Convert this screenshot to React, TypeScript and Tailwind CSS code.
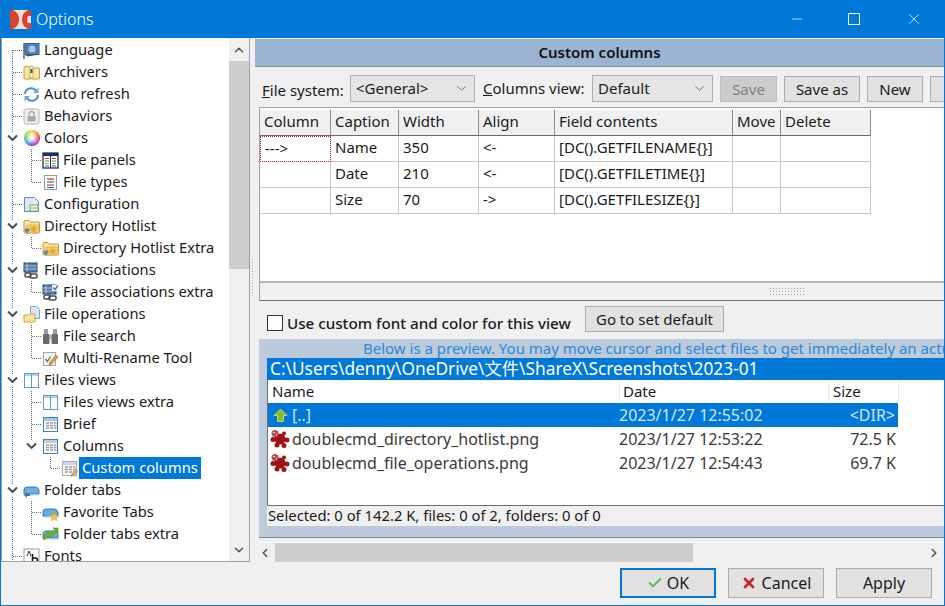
import React from 'react';
import { ChevronDown, ChevronUp, ChevronLeft, ChevronRight, X, Minus, Check } from 'lucide-react';

type IconName =
  | 'lang' | 'arch' | 'refresh' | 'lock' | 'wheel' | 'panels' | 'types' | 'config' | 'hotlist'
  | 'assoc' | 'assocx' | 'fileop' | 'search' | 'rename' | 'views' | 'brief' | 'cols' | 'custom'
  | 'tabs' | 'fav' | 'tabsx' | 'fonts';

type Row = { label: string; icon: IconName; level: number; open?: boolean; last?: boolean; selected?: boolean };

const rows: Row[] = [
  { label: 'Language', icon: 'lang', level: 0 },
  { label: 'Archivers', icon: 'arch', level: 0 },
  { label: 'Auto refresh', icon: 'refresh', level: 0 },
  { label: 'Behaviors', icon: 'lock', level: 0 },
  { label: 'Colors', icon: 'wheel', level: 0, open: true },
  { label: 'File panels', icon: 'panels', level: 1 },
  { label: 'File types', icon: 'types', level: 1, last: true },
  { label: 'Configuration', icon: 'config', level: 0 },
  { label: 'Directory Hotlist', icon: 'hotlist', level: 0, open: true },
  { label: 'Directory Hotlist Extra', icon: 'hotlist', level: 1, last: true },
  { label: 'File associations', icon: 'assoc', level: 0, open: true },
  { label: 'File associations extra', icon: 'assocx', level: 1, last: true },
  { label: 'File operations', icon: 'fileop', level: 0, open: true },
  { label: 'File search', icon: 'search', level: 1 },
  { label: 'Multi-Rename Tool', icon: 'rename', level: 1, last: true },
  { label: 'Files views', icon: 'views', level: 0, open: true },
  { label: 'Files views extra', icon: 'views', level: 1 },
  { label: 'Brief', icon: 'brief', level: 1 },
  { label: 'Columns', icon: 'cols', level: 1, open: true, last: true },
  { label: 'Custom columns', icon: 'custom', level: 2, last: true, selected: true },
  { label: 'Folder tabs', icon: 'tabs', level: 0, open: true },
  { label: 'Favorite Tabs', icon: 'fav', level: 1 },
  { label: 'Folder tabs extra', icon: 'tabsx', level: 1, last: true },
  { label: 'Fonts', icon: 'fonts', level: 0 },
];

const TableIcon = ({ head = '#5b9bd5', line = '#3d85b8', pen = false }: { head?: string; line?: string; pen?: boolean }) => (
  <svg width="17" height="17" viewBox="0 0 17 17">
    <rect x="1.500" y="1.500" width="14" height="14" fill="#fff" stroke={line} />
    <rect x="2" y="2" width="13" height="3" fill={head} opacity="0.55" />
    <path d="M4 7h3M8 7h3M12 7h2.500M4 9.500h3M8 9.500h3M12 9.500h2.500M4 12h3M8 12h3M12 12h2.500" stroke="#9a9a9a" strokeWidth="1.500" />
    {pen && <path d="M10 16.500l1-3 4-4 2 2-4 4z" fill="#e0b050" stroke="#a87820" strokeWidth="0.500" />}
  </svg>
);

const Folder = ({ children }: { children?: React.ReactNode }) => (
  <svg width="17" height="17" viewBox="0 0 17 17">
    <path d="M1 3.500q0-1 1-1h4l1.500 1.500h8q1 0 1 1v9q0 1-1 1h-13.500q-1 0-1-1z" fill="#fbe3a0" stroke="#c79a3a" />
    {children}
  </svg>
);

const Icon = ({ name }: { name: IconName }) => {
  switch (name) {
    case 'lang':
      return (
        <svg width="17" height="17" viewBox="0 0 17 17">
          <path d="M1 1v16" stroke="#5a6a7a" strokeWidth="1.500" />
          <rect x="2" y="1.500" width="14" height="11" fill="#4f7fb4" stroke="#33608f" />
          <circle cx="9" cy="7" r="3.500" fill="#a8c4e4" />
          <path d="M2 13l3 1.500 11-2z" fill="#2c5580" />
        </svg>
      );
    case 'arch':
      return (
        <Folder>
          <rect x="7" y="2" width="3" height="12" fill="#fff7d8" stroke="#9a7a30" strokeWidth="0.500" />
          <rect x="7.500" y="5" width="2" height="4" fill="#4a4a4a" />
        </Folder>
      );
    case 'refresh':
      return (
        <svg width="17" height="17" viewBox="0 0 17 17" fill="none" stroke="#4a8fcc" strokeWidth="2">
          <path d="M2 8a6 6 0 0 1 11-3" />
          <path d="M15.500 1.500v5.500h-5.500z" fill="#6fa9dc" stroke="none" />
          <path d="M15 9a6 6 0 0 1-11 3" />
          <path d="M1.500 15.500v-5.500h5.500z" fill="#6fa9dc" stroke="none" />
        </svg>
      );
    case 'lock':
      return (
        <svg width="17" height="17" viewBox="0 0 17 17">
          <rect x="1" y="1" width="15" height="15" rx="2" fill="#eeeeee" stroke="#b4b4b4" />
          <rect x="4.500" y="8" width="8" height="5.500" fill="#a8a8a8" />
          <path d="M6 8V6a2.500 2.500 0 0 1 5 0v2" fill="none" stroke="#a8a8a8" strokeWidth="1.300" />
        </svg>
      );
    case 'wheel':
      return <div className="w-[16px] h-[16px] rounded-full bg-[radial-gradient(#ffffff_10%,transparent_70%),conic-gradient(#f9d423,#f5832a,#e8264a,#c02fb4,#5a35d8,#2a9be0,#2fcf6a,#a8dc30,#f9d423)]" />;
    case 'panels':
      return (
        <svg width="17" height="17" viewBox="0 0 17 17">
          <rect x="1" y="1" width="15" height="15" fill="#fff" stroke="#1c2f5a" strokeWidth="1.300" />
          <rect x="1" y="1" width="15" height="3" fill="#1c2f5a" />
          <path d="M8.500 1v15" stroke="#1c2f5a" />
          <path d="M3 6.500h4M10 6.500h4" stroke="#d93030" />
          <path d="M3 9h4M10 9h4" stroke="#2aa04a" />
          <path d="M3 11.500h4M10 11.500h4" stroke="#e0a020" />
          <path d="M3 14h4M10 14h4" stroke="#3060c0" />
        </svg>
      );
    case 'types':
      return (
        <svg width="17" height="17" viewBox="0 0 17 17">
          <rect x="2.500" y="1.500" width="12" height="14" fill="#fff" stroke="#9a9a9a" />
          <path d="M5 5h7" stroke="#d93030" strokeWidth="1.300" />
          <path d="M5 8h7" stroke="#30a040" strokeWidth="1.300" />
          <path d="M5 11h7" stroke="#d04080" strokeWidth="1.300" />
          <path d="M5 13.500h7" stroke="#3060c0" strokeWidth="1" />
        </svg>
      );
    case 'config':
      return (
        <svg width="17" height="17" viewBox="0 0 17 17">
          <path d="M1.500 1.500h10l4 4v10h-14z" fill="#dbe8f6" stroke="#5b8fc4" />
          <rect x="7" y="9" width="8" height="6" fill="#fff" stroke="#6aa84f" />
          <path d="M8 12h6" stroke="#6aa84f" />
        </svg>
      );
    case 'hotlist':
      return (
        <Folder>
          <path d="M1 14l3-7h12.500l-2 8h-13z" fill="#f4cd70" stroke="#c79a3a" strokeWidth="0.500" />
          <path d="M10.500 7l1.200 2.500 2.800 0.300-2 1.900 0.500 2.800-2.500-1.400-2.500 1.400 0.500-2.800-2-1.900 2.800-0.300z" fill="#e8a530" />
          <path d="M1 12l4-2 2 2-3 3.500z" fill="#5d87b5" />
        </Folder>
      );
    case 'assoc':
    case 'assocx':
      return (
        <svg width="17" height="17" viewBox="0 0 17 17">
          <rect x="1" y="1" width="13" height="9" fill="#4f7fb0" stroke="#2c4660" />
          <path d="M1 4h13M1 7h13M4 1v9" stroke="#c8d8ea" strokeWidth="0.700" />
          {name === 'assocx' && <path d="M10 1h6v6h-6z" fill="#f0f4f8" />}
          {name === 'assocx' && <path d="M11 3.500l2 2 3-4" fill="none" stroke="#5a6a7a" strokeWidth="1.300" />}
          <rect x="2" y="11" width="6" height="4" rx="1.500" fill="none" stroke="#4a4a4a" strokeWidth="1.500" />
          <rect x="7" y="12" width="7" height="4" rx="1.500" fill="none" stroke="#4a4a4a" strokeWidth="1.500" />
        </svg>
      );
    case 'fileop':
      return (
        <svg width="17" height="17" viewBox="0 0 17 17">
          <path d="M7.500 0.500h6l3 3v9h-9z" fill="#dbe8f6" stroke="#7aa4cc" />
          <path d="M1 9h5l1-1h5v8h-11z" fill="#fbe3a0" stroke="#d0a545" />
        </svg>
      );
    case 'search':
      return (
        <svg width="17" height="17" viewBox="0 0 17 17">
          <rect x="2" y="1" width="4" height="5" fill="#9a9a9a" />
          <rect x="11" y="1" width="4" height="5" fill="#9a9a9a" />
          <rect x="1" y="6" width="6.500" height="10" rx="1" fill="#6a6a6a" />
          <rect x="9.500" y="6" width="6.500" height="10" rx="1" fill="#6a6a6a" />
          <rect x="7" y="7" width="3" height="4" fill="#a8a8a8" />
        </svg>
      );
    case 'rename':
      return (
        <svg width="17" height="17" viewBox="0 0 17 17">
          <rect x="1.500" y="2.500" width="12" height="13" fill="#f5f5f5" stroke="#a8a8a8" />
          <path d="M3.500 9l2 2.500 3-5" fill="none" stroke="#5a8a3a" strokeWidth="1.300" />
          <path d="M7 15l1-3 6-7 2 2-6 7z" fill="#e0a040" stroke="#7a5a20" strokeWidth="0.500" />
        </svg>
      );
    case 'views':
      return (
        <svg width="17" height="17" viewBox="0 0 17 17">
          <rect x="1.500" y="1.500" width="14" height="14" fill="#fff" stroke="#5b9bd5" />
          <rect x="2" y="2" width="13" height="2" fill="#b5d0ea" />
          <path d="M8.500 2v13" stroke="#5b9bd5" />
        </svg>
      );
    case 'brief':
      return <TableIcon />;
    case 'cols':
      return <TableIcon head="#a0a0a0" />;
    case 'custom':
      return <TableIcon head="#c0a8d8" line="#a8a8c0" pen />;
    case 'tabs':
    case 'fav':
    case 'tabsx':
      return (
        <svg width="17" height="17" viewBox="0 0 17 17">
          <path d="M1 12V8q0-3 3-3h8q3 0 4 3v4z" fill="#6aaee2" stroke="#3a78ac" />
          <path d="M0.500 12h16v1.500h-16z" fill="#a8cbe8" />
          {name === 'tabs' && <path d="M1 13l3-3v2h3v2h-3v2z" fill="#3f73a8" />}
          {name === 'fav' && <path d="M12 8l1.400 3 3.300 0.400-2.400 2.200 0.700 3.200-3-1.700-3 1.700 0.700-3.200-2.400-2.200 3.300-0.400z" fill="#f2c040" stroke="#c89820" strokeWidth="0.400" />}
          {name === 'tabsx' && <path d="M1 11l5-5 3 2 4-5-2-1h5v5l-1-2-6 7-3-2-4 4z" fill="#6ab820" stroke="#3c7a10" strokeWidth="0.500" />}
        </svg>
      );
    case 'fonts':
      return (
        <svg width="17" height="17" viewBox="0 0 17 17">
          <rect x="1" y="1" width="15" height="15" fill="#fff" stroke="#9a9a9a" />
          <path d="M4 8l2-5 2 5" fill="none" stroke="#333" />
          <path d="M9.500 6v8M9.500 10h3a2 2 0 0 1 0 4h-3" fill="none" stroke="#111" strokeWidth="1.500" />
        </svg>
      );
  }
};

const Guide = ({ row, first }: { row: Row; first: boolean }) => {
  const x = 10.5 + 19 * row.level;
  const cls = row.level === 0 ? 'w-[21px]' : row.level === 1 ? 'w-[40px]' : 'w-[59px]';
  return (
    <svg className={`${cls} h-[22px] shrink-0`} viewBox={`0 0 ${21 + 19 * row.level} 22`} shapeRendering="crispEdges">
      <g stroke="#6a6a6a" strokeDasharray="1 1" fill="none">
        <path d={`M10.5 ${first ? 11 : 0}V22`} />
        {row.level > 0 && <path d={`M${x} 0V${row.last ? 11 : 22}`} />}
        {!row.open && <path d={`M${x} 11H${x + 10}`} />}
      </g>
      {row.open && (
        <g shapeRendering="auto">
          <rect x={x - 6} y="5" width="12" height="12" fill="#fff" />
          <path d={`M${x - 4.500} 8.500l4.500 4.500 4.500-4.500`} fill="none" stroke="#444" strokeWidth="1.800" />
        </g>
      )}
    </svg>
  );
};

const TreeRow = ({ row, first }: { row: Row; first: boolean }) => (
  <div className="h-[22px] flex items-center whitespace-nowrap">
    <Guide row={row} first={first} />
    <div className="w-[17px] h-[17px] shrink-0 flex items-center justify-center">
      <Icon name={row.icon} />
    </div>
    <span className={`ml-[1px] h-[22px] leading-[21px] px-[3px] text-[14.700px] ${row.selected ? 'bg-[#0078d7] text-white' : 'text-[#1a1a1a]'}`}>{row.label}</span>
  </div>
);

const Tree = () => (
  <div className="w-[249px] h-[524px] shrink-0 flex bg-white border-l border-r border-b border-[#a0a0a0] overflow-hidden">
    <div className="flex-1 min-w-0 pt-px overflow-hidden">
      {rows.map((r, i) => <TreeRow key={r.label + i} row={r} first={i === 0} />)}
    </div>
    <div className="w-[20px] shrink-0 flex flex-col bg-[#f0f0f0]">
      <div className="h-[23px] flex items-center justify-center"><ChevronUp size={14} strokeWidth={2.5} className="text-[#505050]" /></div>
      <div className="h-[208px] bg-[#cdcdcd]" />
      <div className="flex-1" />
      <div className="h-[23px] flex items-center justify-center"><ChevronDown size={14} strokeWidth={2.5} className="text-[#505050]" /></div>
    </div>
  </div>
);

const Combo = ({ value, width }: { value: string; width: string }) => (
  <div className={`${width} h-[27px] shrink-0 flex items-center justify-between pl-[5px] pr-[5px] bg-[#e5e5e5] border border-[#adadad] text-[#1a1a1a]`}>
    <span>{value}</span>
    <ChevronDown size={15} strokeWidth={1} className="text-[#333]" />
  </div>
);

const Btn = ({ children, width, disabled }: { children?: React.ReactNode; width: string; disabled?: boolean }) => (
  <div className={`${width} h-[26px] shrink-0 flex items-center justify-center border ${disabled ? 'bg-[#cccccc] border-[#bfbfbf] text-[#838383]' : 'bg-[#e1e1e1] border-[#adadad] text-[#1a1a1a]'}`}>
    {children}
  </div>
);

const cols = [
  { name: 'Column', w: 'w-[71px]' },
  { name: 'Caption', w: 'w-[68px]' },
  { name: 'Width', w: 'w-[80px]' },
  { name: 'Align', w: 'w-[76px]' },
  { name: 'Field contents', w: 'w-[178px]' },
  { name: 'Move', w: 'w-[48px]' },
  { name: 'Delete', w: 'w-[90px]' },
];

const gridRows = [
  ['--->', 'Name', '350', '<-', '[DC().GETFILENAME{}]', '', ''],
  ['', 'Date', '210', '<-', '[DC().GETFILETIME{}]', '', ''],
  ['', 'Size', '70', '->', '[DC().GETFILESIZE{}]', '', ''],
];

const ColumnsGrid = () => (
  <div className="h-[174px] ml-[4px] pt-[1px] bg-white border-t border-l border-[#a0a0a0] text-[#1a1a1a] overflow-hidden">
    <div className="flex h-[26px] mt-px">
      {cols.map((c) => (
        <div key={c.name} className={`${c.w} h-[26px] shrink-0 pl-[4px] leading-[22px] bg-[#f0f0f0] border-r border-b border-r-[#8a8a8a] border-b-[#6a6a6a]`}>{c.name}</div>
      ))}
    </div>
    {gridRows.map((r, ri) => (
      <div key={ri} className="flex h-[26px]">
        {r.map((v, ci) => (
          <div key={ci} className={`${cols[ci].w} h-[26px] shrink-0 pl-[4px] leading-[23px] ${ri === 0 && ci === 0 ? 'border border-dotted border-[#a02050]' : 'border-r border-b border-[#c6c6c6]'}`}>{v}</div>
        ))}
      </div>
    ))}
  </div>
);

const Splat = () => (
  <svg width="20" height="20" viewBox="0 0 20 20" className="shrink-0">
    <g fill="#9c1414">
      <circle cx="10" cy="10" r="5.500" />
      <circle cx="14" cy="4.500" r="2" />
      <circle cx="17" cy="11" r="2.500" />
      <circle cx="14" cy="16.500" r="2.500" />
      <circle cx="7" cy="16" r="2.500" />
      <circle cx="3" cy="10.500" r="2.500" />
    </g>
    <circle cx="5" cy="4.500" r="3.500" fill="#a85050" />
    <circle cx="4" cy="3.500" r="0.800" fill="#ffffff" />
    <circle cx="6.500" cy="5.500" r="0.700" fill="#e8c8c8" />
  </svg>
);

const FileRow = ({ name, date, size }: { name: string; date: string; size: string }) => (
  <div className="h-[24px] w-[631px] flex items-center whitespace-nowrap text-[#3a3a3a] text-[16px]">
    <div className="w-[351px] flex items-center pl-[2px] gap-[2px]"><Splat /><span>{name}</span></div>
    <span className="w-[200px]">{date}</span>
    <span className="w-[77px] text-right">{size}</span>
  </div>
);

const Preview = () => (
  <div className="h-[199px] ml-[4px] pl-[8px] bg-[#bccbdc] border-b border-[#808890] overflow-hidden whitespace-nowrap">
    <div className="h-[19px] pl-[96px] leading-[19px] text-[#2b88d8]">Below is a preview. You may move cursor and select files to get immediately an actual look and feel of the settings.</div>
    <div className="h-[22px] pl-[3px] leading-[21px] text-[17.300px] bg-[#0078d7] text-white">{'C:\\Users\\denny\\OneDrive\\文件\\ShareX\\Screenshots\\2023-01'}</div>
    <div className="h-[126px] bg-white border-l border-b border-[#707070]">
      <div className="h-[23px] flex items-center text-[#1a1a1a] w-[631px]">
        <span className="w-[351px] pl-[4px]">Name</span>
        <span className="w-[209px] pl-[3px] border-l border-[#e8e8e8] h-[23px] leading-[23px]">Date</span>
        <span className="w-[71px] pl-[4px] border-l border-r border-[#e8e8e8] h-[23px] leading-[23px]">Size</span>
      </div>
      <div className="h-[24px] w-[630px] flex items-center whitespace-nowrap bg-[#0078d7] text-[#cfe6fa] text-[16px]">
        <div className="w-[351px] flex items-center pl-[5px] gap-[4px]">
          <svg width="15" height="15" viewBox="0 0 15 15" className="shrink-0">
            <path d="M7.500 1l6.500 6.500h-3.500v6h-6v-6h-3.500z" fill="#7ac231" stroke="#e6c84a" />
          </svg>
          <span>[..]</span>
        </div>
        <span className="w-[200px]">2023/1/27 12:55:02</span>
        <span className="w-[76px] text-right">{'<DIR>'}</span>
      </div>
      <FileRow name="doublecmd_directory_hotlist.png" date="2023/1/27 12:53:22" size="72.5 K" />
      <FileRow name="doublecmd_file_operations.png" date="2023/1/27 12:54:43" size="69.7 K" />
    </div>
    <div className="h-[20px] pl-[1px] leading-[19px] text-[14.800px] bg-[#f0f0f0] text-[#1a1a1a]">Selected: 0 of 142.2 K, files: 0 of 2, folders: 0 of 0</div>
  </div>
);

const Options = () => (
  <div className="flex-1 min-w-0 h-[524px] flex flex-col overflow-hidden">
    <div className="h-[28px] mt-px shrink-0 bg-[#9bb4d3] border-b border-[#8a8f96] text-center leading-[27px] font-semibold text-[#111]">Custom columns</div>
    <div className="h-[40px] shrink-0 pl-[7px] pt-[8px] flex items-start whitespace-nowrap text-[#1a1a1a]">
      <span className="w-[88px] leading-[30px] shrink-0"><u>F</u>ile system:</span>
      <Combo value="<General>" width="w-[125px]" />
      <span className="w-[117px] pl-[8px] leading-[26px] shrink-0"><u>C</u>olumns view:</span>
      <Combo value="Default" width="w-[121px]" />
      <div className="flex gap-[7px] ml-[7px] pt-px">
        <Btn width="w-[57px]" disabled>Save</Btn>
        <Btn width="w-[76px]">Save as</Btn>
        <Btn width="w-[56px]">New</Btn>
        <Btn width="w-[30px]" />
      </div>
    </div>
    <ColumnsGrid />
    <div className="h-[20px] ml-[4px] shrink-0 bg-[#f0f0f0] border-t-2 border-b border-l border-t-[#b4b4b4] border-b-[#707070] border-l-[#a0a0a0] flex items-center justify-center pl-[370px]">
      <div className="w-[36px] h-[10px] bg-[radial-gradient(#a8a8a8_1px,transparent_1px)] bg-[length:3px_3px]" />
    </div>
    <div className="h-[38px] ml-[12px] shrink-0 flex items-start whitespace-nowrap text-[#1a1a1a] pt-[5px]">
      <div className="w-[16px] h-[16px] bg-white border border-[#333] shrink-0 mt-[9px]" />
      <span className="ml-[4px] w-[298px] font-medium shrink-0 text-[15.200px] mt-[6px]">Use custom font and color for this view</span>
      <div className="h-[27px] flex"><Btn width="w-[139px]">Go to set default</Btn></div>
    </div>
    <Preview />
    <div className="h-[4px] shrink-0" />
    <div className="h-[20px] shrink-0 flex items-center bg-[#f0f0f0] border-t border-white">
      <div className="w-[20px] flex justify-center"><ChevronLeft size={14} strokeWidth={2.5} className="text-[#505050]" /></div>
      <div className="w-[418px] h-[20px] bg-[#cdcdcd]" />
      <div className="flex-1" />
      <div className="w-[20px] flex justify-center"><ChevronRight size={14} strokeWidth={2.5} className="text-[#505050]" /></div>
    </div>
  </div>
);

export default function App() {
  return (
    <div className="w-[945px] h-[606px] flex flex-col overflow-hidden bg-[#f0f0f0] border-x border-b border-[#0078d7] text-[15px] font-['Noto_Sans','Liberation_Sans','Noto_Sans_CJK_TC',sans-serif]">
      <div className="h-[38px] shrink-0 bg-[#0078d7] flex items-center text-white">
        <svg width="21" height="19" viewBox="0 0 21 19" className="ml-[9px] shrink-0">
          <rect width="21" height="19" fill="#f2ded6" />
          <path d="M0 0h3c4 2 6 5 6 9.500s-2 7.500-6 9.500h-3z" fill="#d8432c" />
          <path d="M21 0h-3c-4 2-6 5-6 9.500s2 7.500 6 9.500h3v-6h-3c-1-1-1-6 0-7h3z" fill="#d8432c" />
        </svg>
        <span className="ml-[5px] text-[16px] font-light">Options</span>
        <div className="flex-1" />
        <Minus size={16} strokeWidth={1} className="mr-[43px]" />
        <div className="w-[12px] h-[12px] border border-white mr-[45px]" />
        <X size={18} strokeWidth={1} className="mr-[21px]" />
      </div>
      <div className="flex h-[524px] shrink-0">
        <Tree />
        <div className="w-[5px] shrink-0 flex items-center pl-[1px] pb-[32px]">
          <div className="w-[3px] h-[40px] mt-[-12px] bg-[radial-gradient(#a8a8a8_1px,transparent_1px)] bg-[length:3px_3px]" />
        </div>
        <Options />
      </div>
      <div className="flex-1 flex justify-end items-start gap-[12px] pt-[6px] pr-[12px] text-[#1a1a1a] text-[16px]">
        <div className="w-[96px] h-[30px] flex items-center justify-center gap-[4px] bg-[#e1e1e1] border-2 border-[#0078d7]">
          <Check size={16} strokeWidth={3} className="text-[#5cb85c]" />OK
        </div>
        <div className="w-[96px] h-[30px] flex items-center justify-center gap-[5px] bg-[#e1e1e1] border border-[#adadad]">
          <X size={16} strokeWidth={4} className="text-[#d0202a]" />Cancel
        </div>
        <div className="w-[96px] h-[30px] flex items-center justify-center bg-[#e1e1e1] border border-[#adadad]">Apply</div>
      </div>
    </div>
  );
}
